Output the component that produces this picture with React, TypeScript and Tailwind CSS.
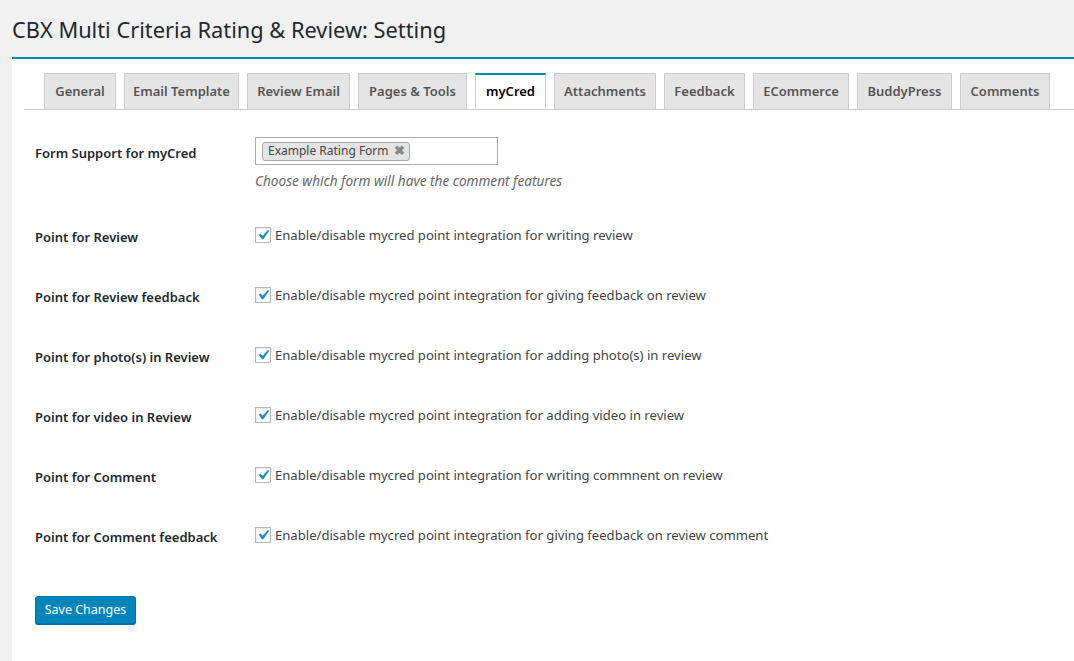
import React from "react";

const tabs = [
  { name: "General", w: 72 },
  { name: "Email Template", w: 115 },
  { name: "Review Email", w: 103 },
  { name: "Pages & Tools", w: 109 },
  { name: "myCred", w: 71, active: true },
  { name: "Attachments", w: 102 },
  { name: "Feedback", w: 81 },
  { name: "ECommerce", w: 96 },
  { name: "BuddyPress", w: 95 },
  { name: "Comments", w: 90 },
];

const rows = [
  ["Point for Review", "Enable/disable mycred point integration for writing review"],
  ["Point for Review feedback", "Enable/disable mycred point integration for giving feedback on review"],
  ["Point for photo(s) in Review", "Enable/disable mycred point integration for adding photo(s) in review"],
  ["Point for video in Review", "Enable/disable mycred point integration for adding video in review"],
  ["Point for Comment", "Enable/disable mycred point integration for writing commnent on review"],
  ["Point for Comment feedback", "Enable/disable mycred point integration for giving feedback on review comment"],
];

function Check() {
  return (
    <span className="relative w-4 h-4 border border-[#b4b9be] bg-white block shadow-[inset_0_1px_2px_rgba(0,0,0,0.1)] shrink-0">
      <svg width="20" height="20" viewBox="0 0 20 20" className="absolute left-[-3px] top-[-3px]">
        <path d="M14.83 4.89l1.34.94-5.81 8.38H9.02L5.78 9.67l1.34-1.25 2.57 2.4z" fill="#1e8cbe" />
      </svg>
    </span>
  );
}

export default function App() {
  return (
    <div
      className="w-[1074px] h-[661px] overflow-hidden bg-[#f1f1f1] text-[#23282d]"
      style={{ fontFamily: '"Noto Sans", "Open Sans", sans-serif' }}
    >
      <div className="h-[57px] pl-3 pt-[14px]">
        <h1 className="text-[21.8px] leading-[32px] font-normal text-[#23282d]">
          CBX Multi Criteria Rating &amp; Review: Setting
        </h1>
      </div>
      <div className="ml-3 bg-white border-t-2 border-[#0085ba] h-[620px] pl-3">
        <div className="mt-[14px] flex border-b border-[#ccc] pl-5 gap-2">
          {tabs.map((t) => (
            <div
              key={t.name}
              style={{ width: t.w }}
              className={
                t.active
                  ? "h-[36px] -mb-px bg-white border border-[#ccc] border-b-white border-t-2 border-t-[#0085ba] flex items-center justify-center text-[13px] font-semibold text-black whitespace-nowrap"
                  : "h-[36px] bg-[#e5e5e5] border border-[#ccc] border-b-0 flex items-center justify-center text-[13px] font-semibold text-[#555] whitespace-nowrap"
              }
            >
              {t.name}
            </div>
          ))}
        </div>

        <div className="pl-[11px]">
          <div className="flex mt-[27px]">
            <div className="w-[220px] pt-[6px] leading-[20px] text-[13px] font-semibold text-[#23282d]">
              Form Support for myCred
            </div>
            <div>
              <div className="w-[243px] h-[28px] border border-[#aaa] flex items-center px-[6px]">
                <span className="h-[19px] flex items-center gap-[5px] bg-[#e4e4e4] border border-[#aaa] rounded-[3px] pl-[5px] pr-[4px] text-[12px] text-[#444]">
                  Example Rating Form
                  <span className="text-[#888] font-bold text-[12.5px] leading-none">✖</span>
                </span>
              </div>
              <div className="mt-[6px] leading-[20px] text-[13.6px] italic text-[#666]">
                Choose which form will have the comment features
              </div>
            </div>
          </div>

          <div className="mt-[34px]">
            {rows.map(([label, text]) => (
              <div key={label} className="flex h-[60px]">
                <div className="w-[220px] pt-[2px] leading-[20px] text-[13px] font-semibold text-[#23282d]">
                  {label}
                </div>
                <div className="flex items-start gap-[4px] leading-[20px] text-[13.1px] text-[#444]">
                  <span className="mt-[2px]">
                    <Check />
                  </span>
                  <span>{text}</span>
                </div>
              </div>
            ))}
          </div>

          <button className="mt-[11px] h-[28px] w-[101px] bg-[#0085ba] border border-[#0073aa] rounded-[3px] shadow-[0_1px_0_#006799] text-white text-[12.5px] leading-[26px]">
            Save Changes
          </button>
        </div>
      </div>
    </div>
  );
}
